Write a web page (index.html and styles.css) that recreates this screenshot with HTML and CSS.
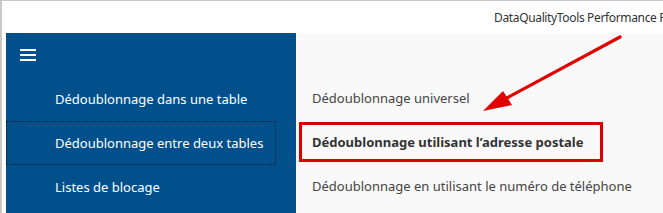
FILE: index.html
```html
<!DOCTYPE html>
<html lang="fr">
<head>
<meta charset="utf-8">
<title>DataQualityTools</title>
<link rel="stylesheet" href="styles.css">
</head>
<body>
<div class="frame">
  <header class="topbar"><span class="title">DataQualityTools Performance Pack</span></header>
  <div class="main">
    <nav class="sidebar">
      <div class="burger"><span></span><span></span><span></span></div>
      <ul class="nav">
        <li class="nav-item">Dédoublonnage dans une table</li>
        <li class="nav-item focused">Dédoublonnage entre deux tables</li>
        <li class="nav-item">Listes de blocage</li>
      </ul>
    </nav>
    <section class="content">
      <ul class="sub">
        <li class="sub-item">Dédoublonnage universel</li>
        <li class="sub-item selected">Dédoublonnage utilisant l’adresse postale<span class="highlight"></span></li>
        <li class="sub-item">Dédoublonnage en utilisant le numéro de téléphone</li>
      </ul>
    </section>
  </div>
  <svg class="arrow" width="663" height="213" viewBox="0 0 663 213">
    <line x1="620" y1="37" x2="505" y2="99" stroke="#e00000" stroke-width="3.2" stroke-linecap="round"/>
    <polygon points="483,111 503,91 512,105" fill="#e00000"/>
  </svg>
</div>
</body>
</html>
```
FILE: styles.css
```css
* { box-sizing: border-box; }
html, body { margin: 0; padding: 0; }
body {
  font-family: "Noto Sans", "Open Sans", sans-serif;
  font-size: 13px;
  background: #fff;
  width: 663px;
  height: 213px;
  overflow: hidden;
}
.frame {
  position: relative;
  height: 213px;
  border-top: 1px solid #c9c9c9;
  border-left: 2px solid #c9c9c9;
  display: flex;
  flex-direction: column;
}
.topbar {
  height: 32px;
  flex: none;
  background: #fff;
  padding-left: 492px;
  white-space: nowrap;
  overflow: hidden;
  display: flex;
  align-items: center;
  color: #333;
  font-size: 12px;
  letter-spacing: -0.35px;
}
.title { display: block; margin-top: 1px; }
.main {
  flex: 1;
  display: flex;
  padding-left: 4px;
  background: #fff;
}
.sidebar {
  width: 290px;
  flex: none;
  background: #01508c;
  color: #fff;
  padding-top: 16px;
}
.burger {
  margin-left: 14px;
  width: 16px;
  display: flex;
  flex-direction: column;
  gap: 3px;
}
.burger span {
  display: block;
  height: 2px;
  background: #fff;
}
.nav {
  list-style: none;
  margin: 16px 20px 0 0;
  padding: 0;
}
.nav-item {
  height: 44px;
  padding-left: 48px;
  display: flex;
  align-items: center;
  border: 1px dotted transparent;
}
.nav-item.focused {
  border-color: #0b1f3a;
}
.content {
  flex: 1;
  background: #f9f9f9;
  padding-top: 43px;
}
.sub {
  list-style: none;
  margin: 0;
  padding: 0;
}
.sub-item {
  position: relative;
  height: 44px;
  padding-left: 16px;
  display: flex;
  align-items: center;
  color: #444;
}
.sub-item.selected {
  font-weight: 700;
  color: #333;
}
.highlight {
  position: absolute;
  left: 3px;
  top: 2px;
  width: 304px;
  height: 40px;
  border: 3px solid #dd0000;
}
.arrow {
  position: absolute;
  left: -2px;
  top: -1px;
  pointer-events: none;
}
```
